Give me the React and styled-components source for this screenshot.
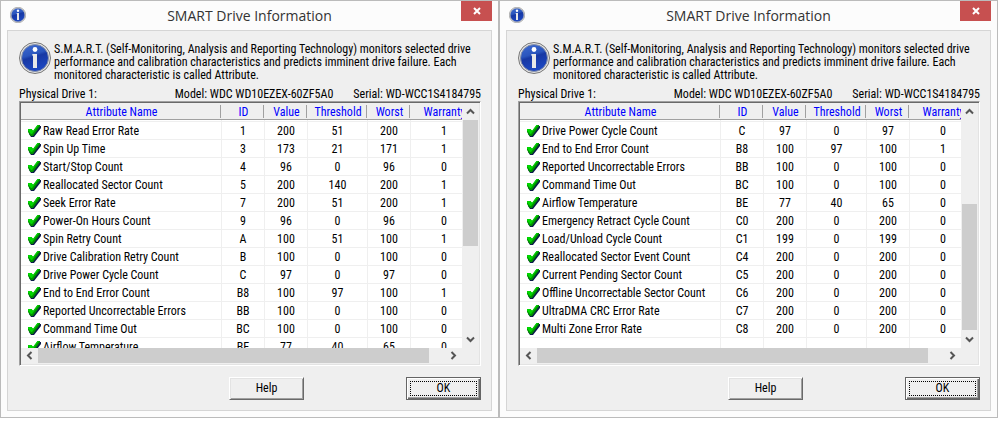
import React, { useId } from "react";
import styled, { createGlobalStyle } from "styled-components";

const GlobalStyle = createGlobalStyle`
  * {
    box-sizing: border-box;
  }
  body {
    margin: 0;
    background: #fff;
    color: #000;
    font-family: "Roboto Condensed", Lato, Arial, sans-serif;
    font-size: 12px;
    line-height: 13px;
  }
  button {
    font: inherit;
    color: inherit;
    padding: 0;
    border: none;
    background: none;
  }
`;

const Desktop = styled.main`
  display: grid;
  grid-template-columns: repeat(2, minmax(0, 1fr));
  align-items: start;
  padding-right: 8px;
`;

const Window = styled.section`
  display: flex;
  flex-direction: column;
  min-width: 0;
  padding: 0 6px 6px;
  border: 1px solid #bbb;
  background: #fcfcfc;
`;

const TitleBar = styled.header`
  display: grid;
  grid-template-columns: 31px 1fr 31px;
  align-items: start;
  height: 29px;

  svg {
    margin: 6px 0 0 3px;
  }
`;

const Title = styled.h1`
  margin: 0;
  font-family: "Open Sans", "Noto Sans", sans-serif;
  font-size: 14px;
  font-weight: 400;
  line-height: 30px;
  text-align: center;
  color: #333;
`;

const CloseButton = styled.button`
  display: flex;
  align-items: center;
  justify-content: center;
  height: 20px;
  background: #c75050;

  && svg {
    margin: 0;
  }
`;

const Panel = styled.div`
  padding: 11px 10px 10px 11px;
  border: 1px solid #d5d5d5;
  background: #efefef;
`;

const Intro = styled.div`
  display: flex;
  gap: 3px;

  svg {
    flex: none;
  }
  p {
    margin: 0;
    padding-top: 1px;
    white-space: nowrap;
  }
`;

const DriveInfo = styled.div`
  display: flex;
  gap: 20px;
  margin-top: 6px;
  white-space: nowrap;

  span:first-child {
    margin-right: auto;
  }
`;

const ListBox = styled.div`
  display: grid;
  grid-template-columns: 1fr 17px;
  grid-template-rows: 245px 16px;
  border: 1px solid;
  border-color: #a0a0a0 #fff #fff #a0a0a0;
  box-shadow: inset 1px 1px #696969, inset -1px -1px #e3e3e3;
  padding: 1px;
`;

const Viewport = styled.div`
  overflow: hidden;
  background: #fff;
`;

const Table = styled.table`
  width: 457px;
  table-layout: fixed;
  border-collapse: separate;
  border-spacing: 0;

  th,
  td {
    padding: 2px 0 0;
    text-align: center;
    white-space: nowrap;
    font-weight: 400;
  }
  thead th {
    height: 17px;
    color: #00f;
    background: linear-gradient(#a0a0a0, #a0a0a0) right 1px center / 1px 13px
      no-repeat #efefef;
    border-bottom: 1px solid #a0a0a0;
  }
  tbody td,
  tbody th {
    height: 18px;
    border-right: 1px solid #efefef;
    border-bottom: 1px solid #efefef;
  }
  tbody tr:first-child > * {
    height: 20px;
    background: linear-gradient(#efefef, #efefef) 0 1px / 100% 1px no-repeat;
    padding-top: 4px;
  }
`;

const Name = styled.div`
  display: flex;
  align-items: center;
  gap: 2px;
  padding-left: 6px;
  height: 13px;

  svg {
    flex: none;
    margin-bottom: 2px;
  }
`;

const VerticalBar = styled.div`
  display: grid;
  grid-template-rows: 17px 1fr 18px;
  padding: 0 1px;
  background: #efefef;
`;

const HorizontalBar = styled.div`
  display: grid;
  grid-template-columns: 17px 1fr 17px;
  padding-bottom: 1px;
  background: #efefef;
`;

const ArrowButton = styled.button`
  display: flex;
  align-items: center;
  justify-content: center;
`;

const VerticalThumb = styled.div`
  height: 126px;
  align-self: ${({ $end }) => ($end ? "end" : "start")};
  background: #cdcdcd;
`;

const HorizontalThumb = styled.div`
  width: 96%;
  background: #cdcdcd;
`;

const Actions = styled.div`
  display: flex;
  justify-content: flex-end;
  gap: 102px;
  margin-top: 11px;
`;

const ActionButton = styled.button`
  width: 75px;
  height: 23px;
  background: #efefef;
  border: 1px solid;
  border-color: #fff #696969 #696969 #fff;
  box-shadow: inset 1px 1px #e3e3e3, inset -1px -1px #a0a0a0;
`;

const DefaultButton = styled(ActionButton)`
  padding: 3px;
  border-color: #646464;
  box-shadow: inset 1px 1px #fff, inset -1px -1px #696969,
    inset -2px -2px #a0a0a0;

  span {
    display: block;
    border: 1px dotted #000;
  }
`;

const columns = [
  { label: "Attribute Name", width: 201 },
  { label: "ID", width: 43 },
  { label: "Value", width: 43 },
  { label: "Threshold", width: 60 },
  { label: "Worst", width: 43 },
  { label: "Warranty", width: 67 },
];

const topRows = [
  ["Raw Read Error Rate", "1", 200, 51, 200, 1],
  ["Spin Up Time", "3", 173, 21, 171, 1],
  ["Start/Stop Count", "4", 96, 0, 96, 0],
  ["Reallocated Sector Count", "5", 200, 140, 200, 1],
  ["Seek Error Rate", "7", 200, 51, 200, 1],
  ["Power-On Hours Count", "9", 96, 0, 96, 0],
  ["Spin Retry Count", "A", 100, 51, 100, 1],
  ["Drive Calibration Retry Count", "B", 100, 0, 100, 0],
  ["Drive Power Cycle Count", "C", 97, 0, 97, 0],
  ["End to End Error Count", "B8", 100, 97, 100, 1],
  ["Reported Uncorrectable Errors", "BB", 100, 0, 100, 0],
  ["Command Time Out", "BC", 100, 0, 100, 0],
  ["Airflow Temperature", "BE", 77, 40, 65, 0],
];

const bottomRows = [
  ...topRows.slice(8),
  ["Emergency Retract Cycle Count", "C0", 200, 0, 200, 0],
  ["Load/Unload Cycle Count", "C1", 199, 0, 199, 0],
  ["Reallocated Sector Event Count", "C4", 200, 0, 200, 0],
  ["Current Pending Sector Count", "C5", 200, 0, 200, 0],
  ["Offline Uncorrectable Sector Count", "C6", 200, 0, 200, 0],
  ["UltraDMA CRC Error Rate", "C7", 200, 0, 200, 0],
  ["Multi Zone Error Rate", "C8", 200, 0, 200, 0],
];

const InfoIcon = ({ size }) => {
  const id = useId();
  return (
    <svg width={size} height={size} viewBox="0 0 32 32" aria-hidden="true">
      <defs>
        <linearGradient id={id} x1="0" y1="0" x2="0.3" y2="1">
          <stop offset="0" stopColor="#3f6cd2" />
          <stop offset="0.45" stopColor="#2a55bd" />
          <stop offset="0.55" stopColor="#1738a4" />
          <stop offset="1" stopColor="#1d47c0" />
        </linearGradient>
      </defs>
      <circle cx="16" cy="16" r="15.5" fill="#e4e4e4" stroke="#777" />
      <circle cx="16" cy="16" r="13.5" fill={`url(#${id})`} stroke="#8a93a8" />
      <circle cx="16" cy="7.5" r="2.4" fill="#fff" />
      <path d="M13.5 12H18v14h-4V13.500h-1z" fill="#e8e8e8" />
    </svg>
  );
};

const CheckIcon = () => (
  <svg width="14" height="12" viewBox="0 0 14 12" aria-hidden="true">
    <path d="M2 5h3l1 2L11 1h3v2L7 12H4L2 9z" fill="#0b1a4a" />
    <path d="M1 4h3.500l1.500 2L10.500 0H13v1.500L6 11H3.500L1 7z" fill="#009000" />
    <path d="M1 4h3.500l1.500 2L10.500 0H12L5 9H4L1 5.500z" fill="#00d800" />
  </svg>
);

const turns = { up: 0, right: 90, down: 180, left: 270 };

const Arrow = ({ to }) => (
  <svg width="9" height="9" viewBox="0 0 9 9" aria-hidden="true">
    <path
      d="M1 6.500L4.500 3L8 6.500"
      fill="none"
      stroke="#555"
      strokeWidth="2"
      transform={`rotate(${turns[to]} 4.500 4.500)`}
    />
  </svg>
);

const AttributeList = ({ rows, scrolled }) => (
  <ListBox>
    <Viewport>
      <Table>
        <colgroup>
          {columns.map(({ label, width }) => (
            <col key={label} width={width} />
          ))}
        </colgroup>
        <thead>
          <tr>
            {columns.map(({ label }) => (
              <th key={label} scope="col">
                {label}
              </th>
            ))}
          </tr>
        </thead>
        <tbody>
          {rows.map(([name, ...values]) => (
            <tr key={name}>
              <th scope="row">
                <Name>
                  <CheckIcon />
                  {name}
                </Name>
              </th>
              {values.map((value, i) => (
                <td key={i}>{value}</td>
              ))}
            </tr>
          ))}
          {scrolled && (
            <tr>
              {columns.map(({ label }) => (
                <td key={label} />
              ))}
            </tr>
          )}
        </tbody>
      </Table>
    </Viewport>
    <VerticalBar>
      <ArrowButton type="button" aria-label="Scroll up">
        <Arrow to="up" />
      </ArrowButton>
      <VerticalThumb $end={scrolled} />
      <ArrowButton type="button" aria-label="Scroll down">
        <Arrow to="down" />
      </ArrowButton>
    </VerticalBar>
    <HorizontalBar>
      <ArrowButton type="button" aria-label="Scroll left">
        <Arrow to="left" />
      </ArrowButton>
      <HorizontalThumb />
      <ArrowButton type="button" aria-label="Scroll right">
        <Arrow to="right" />
      </ArrowButton>
    </HorizontalBar>
  </ListBox>
);

const SmartWindow = ({ rows, scrolled }) => (
  <Window>
    <TitleBar>
      <InfoIcon size={16} />
      <Title>SMART Drive Information</Title>
      <CloseButton type="button" aria-label="Close">
        <svg width="8" height="8" viewBox="0 0 8 8">
          <path d="M1 1l6 6M7 1L1 7" stroke="#fff" strokeWidth="2" />
        </svg>
      </CloseButton>
    </TitleBar>
    <Panel>
      <Intro>
        <InfoIcon size={32} />
        <p>
          S.M.A.R.T. (Self-Monitoring, Analysis and Reporting Technology)
          monitors selected drive
          <br />
          performance and calibration characteristics and predicts imminent
          drive failure. Each
          <br />
          monitored characteristic is called Attribute.
        </p>
      </Intro>
      <DriveInfo>
        <span>Physical Drive 1:</span>
        <span>Model: WDC WD10EZEX-60ZF5A0</span>
        <span>Serial: WD-WCC1S4184795</span>
      </DriveInfo>
      <AttributeList rows={rows} scrolled={scrolled} />
      <Actions>
        <ActionButton type="button">Help</ActionButton>
        <DefaultButton type="button">
          <span>OK</span>
        </DefaultButton>
      </Actions>
    </Panel>
  </Window>
);

const App = () => (
  <>
    <GlobalStyle />
    <Desktop>
      <SmartWindow rows={topRows} />
      <SmartWindow rows={bottomRows} scrolled />
    </Desktop>
  </>
);

export default App;
